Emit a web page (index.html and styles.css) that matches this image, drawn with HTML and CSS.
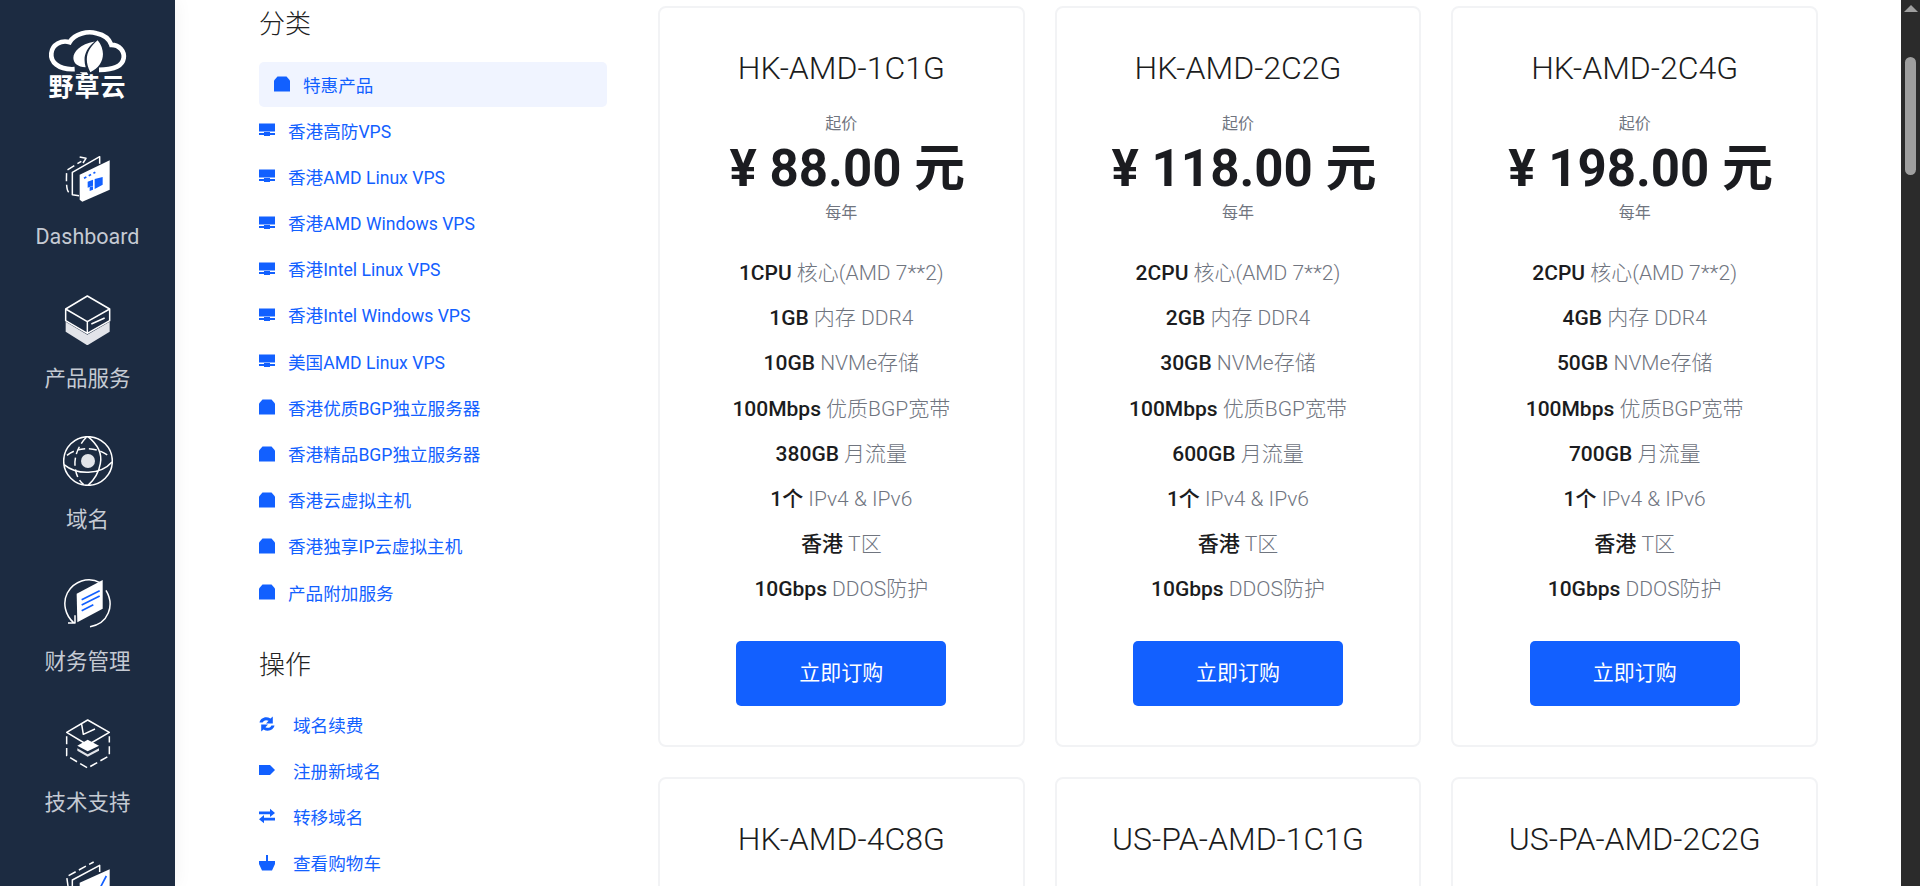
FILE: index.html
```html
<!DOCTYPE html>
<html lang="zh-CN">
<head>
    <meta charset="UTF-8">
    <title>野草云 - 购物车</title>
    <meta name="viewport" content="width=device-width, initial-scale=1.0">
    <link rel="stylesheet" href="styles.css">
</head>
<body>
    <svg class="icon-defs" aria-hidden="true">
        <symbol id="i-bag" viewBox="0 0 16 16"><path d="M0 15.5V4.5L3.5 .5H12.5L16 4.5V15.5Z"/></symbol>
        <symbol id="i-server" viewBox="0 0 16 16"><path d="M0 1.5H16V9.5H0ZM0 11H5V10H11V11H16V13H11V14H5V13H0Z"/></symbol>
        <symbol id="i-sync" viewBox="0 0 16 16"><path d="M.5 6.5C1.2 2.6 6.5-.6 11.5 2.6L13.8 .5V7.4H7L9.6 4.8C6.8 3.4 4.4 4.6 3.6 6.5ZM15.5 9.5C14.8 13.4 9.5 16.6 4.5 13.4L2.2 15.5V8.6H9L6.4 11.2C9.2 12.6 11.6 11.4 12.4 9.5Z"/></symbol>
        <symbol id="i-tag" viewBox="0 0 16 16"><path d="M0 3H11L16 8L11 13H0Z"/></symbol>
        <symbol id="i-swap" viewBox="0 0 16 16"><path d="M0 3.4H11V.8L16 5L11 9V6.2H0ZM16 9.8H5V7L0 11.2L5 15.2V12.6H16Z"/></symbol>
        <symbol id="i-basket" viewBox="0 0 16 16"><path d="M7 0H9V6H16V9L13 15.5H3L0 9V6H7Z"/></symbol>
    </svg>

    <aside class="sidebar">
        <a class="logo" href="#">
            <svg class="logo-cloud" viewBox="145 80 240 140">
                <path class="cloud-line" d="M225 203C175 206 152 180 155 155C158 128 185 115 210 122C225 95 265 88 290 95C315 100 330 115 335 130C360 130 375 150 372 170C368 195 340 205 298 205"/>
                <path class="cloud-leaf" d="M258 197C205 197 205 135 285 120C255 145 250 170 258 197ZM294 116C322 150 312 195 272 212C250 170 265 140 294 116ZM228 218H252L246 222H234ZM240 212H262L268 224H258Z"/>
            </svg>
            <span class="logo-text">野草云</span>
        </a>
        <nav class="menu">
            <a class="menu-item" href="#">
                <svg class="menu-icon" viewBox="190 460 150 150">
                    <path class="line dash" d="M207 578C199 570 200 540 201 512L245 485"/>
                    <path class="line" d="M240 472L259 476L250 490"/>
                    <path class="line" d="M238 588L218 585V518L300 471V492"/>
                    <path class="solid" d="M240 525L330 482V570L248 606L240 600Z"/>
                    <path class="blue" d="M264 546L280 540V558L264 564ZM285 538L309 532V555L285 568ZM270 563L280 560V570L270 574Z"/>
                    <path class="blue-line dash-small" d="M253 536L287 518"/>
                </svg>
                <span class="menu-label">Dashboard</span>
            </a>
            <a class="menu-item" href="#">
                <svg class="menu-icon" viewBox="190 878 150 150">
                    <path class="soft" d="M198 958L263 997L330 958V988L263 1029L198 988Z"/>
                    <path class="line" d="M263 881L330 920V955L263 993L198 955V920ZM198 920L263 958L330 920M263 958V993M275 965L315 947"/>
                </svg>
                <span class="menu-label">产品服务</span>
            </a>
            <a class="menu-item" href="#">
                <svg class="menu-icon" viewBox="38 32 150 150">
                    <circle class="line" cx="113" cy="107" r="73"/>
                    <circle class="soft" cx="113" cy="107" r="21"/>
                    <path class="line" d="M113 34C145 60 155 90 150 115C145 145 130 165 113 180M41 118C80 150 150 150 185 110"/>
                    <path class="line dash" d="M108 36C80 65 70 100 75 130C78 150 85 165 100 178M50 90C80 65 140 60 178 95"/>
                </svg>
                <span class="menu-label">域名</span>
            </a>
            <a class="menu-item" href="#">
                <svg class="menu-icon" viewBox="189 378 150 150">
                    <path class="line" d="M222 513C195 490 187 452 202 423C220 388 265 372 300 392M318 415C345 460 325 515 270 524M204 513H225V490"/>
                    <path class="solid" d="M230 425L308 384V470L232 511Z"/>
                    <path class="blue-line" d="M245 443L299 416M245 459L299 432M245 476L280 458"/>
                </svg>
                <span class="menu-label">财务管理</span>
            </a>
            <a class="menu-item" href="#">
                <svg class="menu-icon" viewBox="189 800 150 150">
                    <path class="line" d="M263 803L328 840L263 878L200 840ZM245 816L250 846L285 830"/>
                    <path class="line dash" d="M200 852V910L263 947L328 910V852"/>
                    <path class="soft" d="M232 888L263 906L297 888V895L263 913L232 895Z"/>
                    <path class="solid" d="M263 862L297 880L263 897L232 880Z"/>
                </svg>
                <span class="menu-label">技术支持</span>
            </a>
            <a class="menu-item" href="#">
                <svg class="menu-icon" viewBox="190 1225 150 150">
                    <path class="line dash" d="M205 1300L201 1272L282 1228"/>
                    <path class="line" d="M218 1340V1282L300 1238V1258"/>
                    <path class="solid" d="M240 1290L330 1250V1340L240 1375Z"/>
                    <path class="blue-line" d="M298 1312L320 1270"/>
                </svg>
            </a>
        </nav>
    </aside>

    <main class="content">
        <section class="side-panel">
            <h2 class="panel-title">分类</h2>
            <ul class="panel-list">
                <li><a class="panel-link active" href="#"><svg class="panel-icon"><use href="#i-bag"/></svg>特惠产品</a></li>
                <li><a class="panel-link" href="#"><svg class="panel-icon"><use href="#i-server"/></svg>香港高防VPS</a></li>
                <li><a class="panel-link" href="#"><svg class="panel-icon"><use href="#i-server"/></svg>香港AMD Linux VPS</a></li>
                <li><a class="panel-link" href="#"><svg class="panel-icon"><use href="#i-server"/></svg>香港AMD Windows VPS</a></li>
                <li><a class="panel-link" href="#"><svg class="panel-icon"><use href="#i-server"/></svg>香港Intel Linux VPS</a></li>
                <li><a class="panel-link" href="#"><svg class="panel-icon"><use href="#i-server"/></svg>香港Intel Windows VPS</a></li>
                <li><a class="panel-link" href="#"><svg class="panel-icon"><use href="#i-server"/></svg>美国AMD Linux VPS</a></li>
                <li><a class="panel-link" href="#"><svg class="panel-icon"><use href="#i-bag"/></svg>香港优质BGP独立服务器</a></li>
                <li><a class="panel-link" href="#"><svg class="panel-icon"><use href="#i-bag"/></svg>香港精品BGP独立服务器</a></li>
                <li><a class="panel-link" href="#"><svg class="panel-icon"><use href="#i-bag"/></svg>香港云虚拟主机</a></li>
                <li><a class="panel-link" href="#"><svg class="panel-icon"><use href="#i-bag"/></svg>香港独享IP云虚拟主机</a></li>
                <li><a class="panel-link" href="#"><svg class="panel-icon"><use href="#i-bag"/></svg>产品附加服务</a></li>
            </ul>
            <h2 class="panel-title panel-title-second">操作</h2>
            <ul class="panel-list actions">
                <li><a class="panel-link" href="#"><svg class="panel-icon"><use href="#i-sync"/></svg>域名续费</a></li>
                <li><a class="panel-link" href="#"><svg class="panel-icon"><use href="#i-tag"/></svg>注册新域名</a></li>
                <li><a class="panel-link" href="#"><svg class="panel-icon"><use href="#i-swap"/></svg>转移域名</a></li>
                <li><a class="panel-link" href="#"><svg class="panel-icon"><use href="#i-basket"/></svg>查看购物车</a></li>
            </ul>
        </section>

        <section class="plans">
            <article class="plan-card">
                <h3 class="plan-name">HK-AMD-1C1G</h3>
                <p class="plan-note">起价</p>
                <p class="plan-price">¥ 88.00 元</p>
                <p class="plan-note">每年</p>
                <ul class="plan-specs">
                    <li><b>1CPU</b> 核心(AMD 7**2)</li>
                    <li><b>1GB</b> 内存 DDR4</li>
                    <li><b>10GB</b> NVMe存储</li>
                    <li><b>100Mbps</b> 优质BGP宽带</li>
                    <li><b>380GB</b> 月流量</li>
                    <li><b>1个</b> IPv4 &amp; IPv6</li>
                    <li><b>香港</b> T区</li>
                    <li><b>10Gbps</b> DDOS防护</li>
                </ul>
                <a class="order-btn" href="#">立即订购</a>
            </article>
            <article class="plan-card">
                <h3 class="plan-name">HK-AMD-2C2G</h3>
                <p class="plan-note">起价</p>
                <p class="plan-price">¥ 118.00 元</p>
                <p class="plan-note">每年</p>
                <ul class="plan-specs">
                    <li><b>2CPU</b> 核心(AMD 7**2)</li>
                    <li><b>2GB</b> 内存 DDR4</li>
                    <li><b>30GB</b> NVMe存储</li>
                    <li><b>100Mbps</b> 优质BGP宽带</li>
                    <li><b>600GB</b> 月流量</li>
                    <li><b>1个</b> IPv4 &amp; IPv6</li>
                    <li><b>香港</b> T区</li>
                    <li><b>10Gbps</b> DDOS防护</li>
                </ul>
                <a class="order-btn" href="#">立即订购</a>
            </article>
            <article class="plan-card">
                <h3 class="plan-name">HK-AMD-2C4G</h3>
                <p class="plan-note">起价</p>
                <p class="plan-price">¥ 198.00 元</p>
                <p class="plan-note">每年</p>
                <ul class="plan-specs">
                    <li><b>2CPU</b> 核心(AMD 7**2)</li>
                    <li><b>4GB</b> 内存 DDR4</li>
                    <li><b>50GB</b> NVMe存储</li>
                    <li><b>100Mbps</b> 优质BGP宽带</li>
                    <li><b>700GB</b> 月流量</li>
                    <li><b>1个</b> IPv4 &amp; IPv6</li>
                    <li><b>香港</b> T区</li>
                    <li><b>10Gbps</b> DDOS防护</li>
                </ul>
                <a class="order-btn" href="#">立即订购</a>
            </article>
            <article class="plan-card">
                <h3 class="plan-name">HK-AMD-4C8G</h3>
                <p class="plan-note">起价</p>
            </article>
            <article class="plan-card">
                <h3 class="plan-name">US-PA-AMD-1C1G</h3>
                <p class="plan-note">起价</p>
            </article>
            <article class="plan-card">
                <h3 class="plan-name">US-PA-AMD-2C2G</h3>
                <p class="plan-note">起价</p>
            </article>
        </section>
    </main>

    <div class="scrollbar">
        <span class="scroll-arrow"></span>
        <span class="scroll-thumb"></span>
    </div>
</body>
</html>
```

FILE: styles.css
```css
:root {
    --navy: #1c2b41;
    --blue: #1260ff;
    --text-dark: #1b1c20;
    --text-muted: #70757f;
    --border: #f2f3f5;
}

* {
    margin: 0;
    padding: 0;
    box-sizing: border-box;
}

html, body {
    height: 100%;
    overflow: hidden;
}

body {
    display: flex;
    font-family: Roboto, "Noto Sans CJK SC", sans-serif;
    color: var(--text-dark);
    background: #fff;
}

a {
    text-decoration: none;
    color: inherit;
}

ul {
    list-style: none;
}

.icon-defs {
    display: none;
}

/* left bar */
.sidebar {
    flex: 0 0 175px;
    height: 100%;
    overflow: hidden;
    padding-top: 28px;
    background: var(--navy);
    box-shadow: 0 0 18px rgba(0, 0, 0, 0.06);
    z-index: 1;
}

.logo {
    display: flex;
    flex-direction: column;
    align-items: center;
    height: 72px;
    color: #fff;
}

.logo-cloud {
    width: 80px;
    height: 47px;
    flex: none;
}

.cloud-line {
    fill: none;
    stroke: #fff;
    stroke-width: 14;
}

.cloud-leaf {
    fill: #fff;
}

.logo-text {
    font-size: 25px;
    line-height: 25px;
    font-weight: 700;
    letter-spacing: 1px;
}

.menu {
    display: flex;
    flex-direction: column;
    gap: 44.5px;
    margin-top: 53px;
}

.menu-item {
    display: flex;
    flex-direction: column;
    align-items: center;
    flex: none;
}

.menu-icon {
    width: 50px;
    height: 50px;
    flex: none;
}

.menu-icon .line {
    fill: none;
    stroke: #fff;
    stroke-width: 4.5;
    stroke-linejoin: round;
}

.menu-icon .dash {
    stroke-dasharray: 24 11;
}

.menu-icon .solid {
    fill: #fff;
}

.menu-icon .soft {
    fill: #e2e4e9;
}

.menu-icon .blue {
    fill: var(--blue);
}

.menu-icon .blue-line {
    fill: none;
    stroke: var(--blue);
    stroke-width: 5;
}

.menu-icon .dash-small {
    stroke-dasharray: 8 8;
}

.menu-label {
    margin-top: 21px;
    font-size: 21.5px;
    line-height: 26px;
    color: #c5cad3;
}

/* middle column and cards */
.content {
    flex: 1;
    min-width: 0;
    display: flex;
    gap: 51px;
    padding: 6px 0 0 84px;
}

.side-panel {
    flex: 0 0 348px;
}

.panel-title {
    font-size: 26px;
    line-height: 36px;
    font-weight: 300;
    color: #222;
}

.panel-title-second {
    margin-top: 32px;
}

.panel-list {
    margin-top: 20px;
}

.actions {
    margin-top: 19px;
}

.panel-link {
    display: flex;
    align-items: center;
    height: 45px;
    margin-bottom: 1.2px;
    padding-bottom: 1px;
    font-size: 17.6px;
    color: var(--blue);
    border-radius: 5px;
}

.panel-link.active {
    padding-left: 15px;
    background: #f0f4ff;
}

.panel-icon {
    width: 16px;
    height: 16px;
    margin-right: 13px;
    fill: var(--blue);
    flex: none;
}

.actions .panel-icon {
    margin-right: 18px;
}

.plans {
    flex: 0 0 1160px;
    display: grid;
    grid-template-columns: repeat(3, 1fr);
    gap: 30px;
    align-content: start;
}

.plan-card {
    min-height: 741px;
    padding: 40px 0 38px;
    border: 2px solid var(--border);
    border-radius: 8px;
    text-align: center;
}

.plan-name {
    font-size: 32px;
    line-height: 40px;
    font-weight: 300;
    color: var(--text-dark);
    margin-bottom: 26px;
}

.plan-note {
    font-size: 16px;
    line-height: 20px;
    color: var(--text-muted);
}

.plan-price {
    padding-left: 12px;
    font-size: 51px;
    line-height: 69px;
    font-weight: 700;
}

.plan-specs {
    margin-top: 28px;
    font-size: 21px;
    line-height: 45.2px;
    font-weight: 300;
    color: var(--text-muted);
}

.plan-specs b {
    font-weight: 500;
    color: var(--text-dark);
}

.order-btn {
    display: block;
    width: 210px;
    height: 65px;
    margin: 28px auto 0;
    font-size: 21px;
    line-height: 65px;
    color: #fff;
    background: var(--blue);
    border-radius: 5px;
}

/* dark scrollbar on the right */
.scrollbar {
    flex: 0 0 19px;
    height: 100%;
    display: flex;
    flex-direction: column;
    align-items: center;
    background: #2b2b2b;
}

.scroll-arrow {
    margin-top: 5px;
    width: 0;
    height: 0;
    border-left: 7px solid transparent;
    border-right: 7px solid transparent;
    border-bottom: 7px solid #9f9f9f;
}

.scroll-thumb {
    width: 11px;
    height: 118px;
    margin-top: 45px;
    background: #9f9f9f;
    border-radius: 6px;
}
```
